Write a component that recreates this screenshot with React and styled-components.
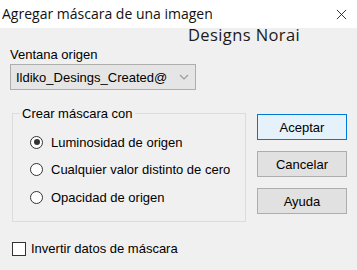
import React from "react";
import styled, { createGlobalStyle } from "styled-components";

const Global = createGlobalStyle`
  html, body {
    margin: 0;
    padding: 0;
    background: #f0f0f0;
  }
  body {
    width: 357px;
    height: 270px;
    overflow: hidden;
  }
`;

const UI_FONT = `"Liberation Sans Narrow", "Liberation Sans", Arial, sans-serif`;

export default function App() {
  return (
    <>
      <Global />
      <Window>
        <TitleBar>
          <Title>Agregar máscara de una imagen</Title>
          <CloseIcon viewBox="0 0 12 12">
            <path d="M1 1 L11 11 M11 1 L1 11" stroke="#222" strokeWidth="1" />
          </CloseIcon>
        </TitleBar>
        <Body>
          <Watermark>Designs Norai</Watermark>
          <Columns>
            <LeftCol>
              <Label>Ventana origen</Label>
              <Combo>
                <span>Ildiko_Desings_Created@</span>
                <Chevron viewBox="0 0 10 6">
                  <path d="M1 1 L5 5 L9 1" fill="none" stroke="#9a9a9a" strokeWidth="1.2" />
                </Chevron>
              </Combo>
              <Group>
                <Legend>Crear máscara con</Legend>
                <RadioRow>
                  <Radio checked />
                  <span>Luminosidad de origen</span>
                </RadioRow>
                <RadioRow>
                  <Radio />
                  <span>Cualquier valor distinto de cero</span>
                </RadioRow>
                <RadioRow>
                  <Radio />
                  <span>Opacidad de origen</span>
                </RadioRow>
              </Group>
              <CheckRow>
                <CheckBox />
                <span>Invertir datos de máscara</span>
              </CheckRow>
            </LeftCol>
            <Buttons>
              <Button primary>Aceptar</Button>
              <Button>Cancelar</Button>
              <Button>Ayuda</Button>
            </Buttons>
          </Columns>
        </Body>
      </Window>
    </>
  );
}

const Window = styled.div`
  width: 357px;
  height: 270px;
  background: #f0f0f0;
  font-family: ${UI_FONT};
  color: #000;
`;

const TitleBar = styled.div`
  height: 28px;
  background: #fff;
  display: flex;
  align-items: center;
  justify-content: space-between;
  padding: 0 10px 0 2px;
  box-sizing: border-box;
`;

const Title = styled.div`
  font-family: "Open Sans", "Noto Sans", sans-serif;
  font-size: 14px;
  color: #111;
  margin-top: -2px;
`;

const CloseIcon = styled.svg`
  width: 11px;
  height: 11px;
`;

const Body = styled.div`
  padding: 0 10px;
`;

const Watermark = styled.div`
  padding-left: 178px;
  height: 18px;
  line-height: 18px;
  margin-top: -2px;
  margin-bottom: 2px;
  font-family: "Open Sans", "Noto Sans", sans-serif;
  font-size: 16.5px;
  letter-spacing: 0.4px;
  color: #1a1a1a;
`;

const Columns = styled.div`
  display: flex;
  justify-content: space-between;
`;

const LeftCol = styled.div`
  width: 236px;
  display: flex;
  flex-direction: column;
`;

const Label = styled.div`
  font-size: 13px;
  height: 18px;
  line-height: 18px;
`;

const Combo = styled.div`
  width: 186px;
  height: 26px;
  box-sizing: border-box;
  border: 1px solid #adadad;
  background: #e5e5e5;
  display: flex;
  align-items: center;
  justify-content: space-between;
  padding: 0 6px 0 5px;
  font-size: 13px;
`;

const Chevron = styled.svg`
  width: 10px;
  height: 6px;
`;

const Group = styled.fieldset`
  margin: 16px 0 0 2px;
  padding: 12px 0 15px 17px;
  border: 1px solid #dcdcdc;
  border-radius: 0;
  min-width: 0;
  display: flex;
  flex-direction: column;
  gap: 9.5px;
`;

const Legend = styled.legend`
  font-size: 13px;
  padding: 0 2px;
  margin-left: -10px;
`;

const RadioRow = styled.div`
  display: flex;
  align-items: center;
  gap: 8px;
  font-size: 13px;
  height: 18px;
`;

const Radio = styled.span`
  width: 13px;
  height: 13px;
  box-sizing: border-box;
  border-radius: 50%;
  border: 1px solid #333;
  background: #fff;
  position: relative;
  flex: none;
  &::after {
    content: "";
    display: ${(p) => (p.checked ? "block" : "none")};
    position: absolute;
    left: 2.5px;
    top: 2.5px;
    width: 6px;
    height: 6px;
    border-radius: 50%;
    background: #333;
  }
`;

const CheckRow = styled.div`
  margin: 19px 0 0 2px;
  display: flex;
  align-items: center;
  gap: 5px;
  font-size: 13px;
`;

const CheckBox = styled.span`
  width: 14px;
  height: 14px;
  box-sizing: border-box;
  border: 1px solid #333;
  background: #fff;
`;

const Buttons = styled.div`
  display: flex;
  flex-direction: column;
  gap: 11px;
  padding-top: 68px;
`;

const Button = styled.button`
  width: 90px;
  height: 26px;
  box-sizing: border-box;
  font-family: ${UI_FONT};
  font-size: 13px;
  color: #000;
  border: 1px solid ${(p) => (p.primary ? "#0078d7" : "#adadad")};
  background: ${(p) => (p.primary ? "#e5f1fb" : "#e1e1e1")};
  padding: 0;
`;
